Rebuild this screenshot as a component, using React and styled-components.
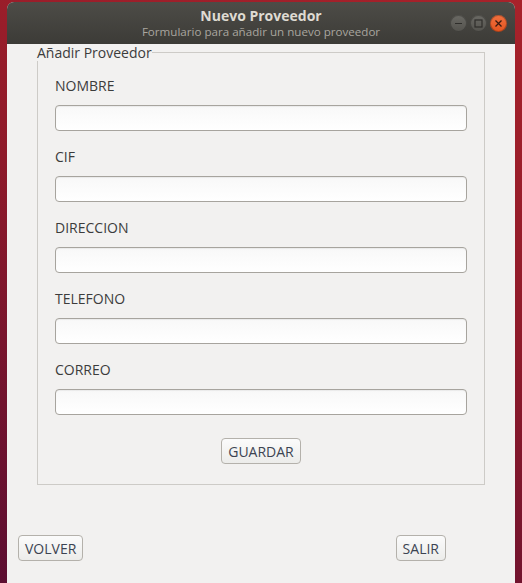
import React from "react";
import styled, { createGlobalStyle } from "styled-components";

const Global = createGlobalStyle`
  html, body { margin: 0; padding: 0; }
  body {
    width: 522px;
    height: 583px;
    overflow: hidden;
    background: linear-gradient(200deg, #a8222a 0%, #8e1a2a 45%, #5c0e31 100%);
    font-family: "Open Sans", "Noto Sans", sans-serif;
  }
`;

const Window = styled.div`
  margin: 2px 0 0 7px;
  width: 508px;
  height: 600px;
  display: flex;
  flex-direction: column;
  background: #f2f1f0;
  border-radius: 7px 7px 0 0;
  overflow: hidden;
`;

const TitleBar = styled.div`
  position: relative;
  height: 42px;
  flex: none;
  box-sizing: border-box;
  padding-top: 6px;
  background: linear-gradient(#4d4c47, #3c3b37);
  display: flex;
  flex-direction: column;
  align-items: center;
  gap: 2px;
`;

const Title = styled.div`
  font-family: "Open Sans", "Noto Sans", sans-serif;
  font-weight: 700;
  font-size: 14px;
  line-height: 15px;
  color: #dfdbd2;
`;

const Subtitle = styled.div`
  font-size: 11.6px;
  line-height: 13px;
  color: #a9a69f;
`;

const Controls = styled.div`
  position: absolute;
  right: 8px;
  top: 13px;
  display: flex;
  gap: 3px;
`;

const CircleBtn = styled.div`
  width: 17px;
  height: 17px;
  border-radius: 50%;
  display: flex;
  align-items: center;
  justify-content: center;
  background: ${(p) =>
    p.$close
      ? "linear-gradient(#f0703f, #e4541f)"
      : "linear-gradient(#6a6964, #53524d)"};
  box-shadow: inset 0 0 0 1px rgba(0,0,0,0.25);
`;

const Body = styled.div`
  flex: 1;
  display: flex;
  flex-direction: column;
`;

const Fieldset = styled.fieldset`
  margin: 0 30px 0 30px;
  padding: 0;
  border: 1px solid #cdcbc7;
  min-width: 0;
`;

const Legend = styled.legend`
  padding: 0;
  margin-left: -1px;
  font-size: 14px;
  line-height: 17px;
  color: #3c3c3c;
`;

const Inner = styled.div`
  padding: 17px 17px 20px 17px;
  display: flex;
  flex-direction: column;
`;

const Group = styled.div`
  display: flex;
  flex-direction: column;
  margin-bottom: 18px;
`;

const Label = styled.label`
  font-size: 14px;
  line-height: 16px;
  color: #3c3c3c;
  margin-bottom: 11px;
`;

const Input = styled.input`
  box-sizing: border-box;
  height: 26px;
  width: 412px;
  border: 1px solid #a7a49e;
  border-radius: 4px;
  background: linear-gradient(#f8f8f8, #ffffff);
  box-shadow: inset 0 1px 1px rgba(0,0,0,0.06);
  outline: none;
  padding: 0 6px;
  font-family: inherit;
`;

const Button = styled.button`
  box-sizing: border-box;
  height: 26px;
  padding: 0 6px;
  border: 1px solid #b4b1ab;
  border-radius: 4px;
  background: linear-gradient(#fbfbfb, #ececea);
  font-family: "Open Sans", "Noto Sans", sans-serif;
  font-size: 14px;
  color: #3c4452;
  cursor: pointer;
`;

const Center = styled.div`
  display: flex;
  justify-content: center;
  margin-top: 5px;
`;

const BottomRow = styled.div`
  display: flex;
  justify-content: space-between;
  padding: 50px 69px 0 11px;
`;

const fields = ["NOMBRE", "CIF", "DIRECCION", "TELEFONO", "CORREO"];

export default function App() {
  return (
    <>
      <Global />
      <Window>
        <TitleBar>
          <Title>Nuevo Proveedor</Title>
          <Subtitle>Formulario para añadir un nuevo proveedor</Subtitle>
          <Controls>
            <CircleBtn>
              <svg width="9" height="9" viewBox="0 0 9 9">
                <line x1="1" y1="4.5" x2="8" y2="4.5" stroke="#2f2e2b" strokeWidth="1.2" />
              </svg>
            </CircleBtn>
            <CircleBtn>
              <svg width="9" height="9" viewBox="0 0 9 9">
                <rect x="1" y="1" width="7" height="7" fill="none" stroke="#2f2e2b" strokeWidth="1.2" />
              </svg>
            </CircleBtn>
            <CircleBtn $close>
              <svg width="9" height="9" viewBox="0 0 9 9">
                <path d="M1.5 1.5 L7.5 7.5 M7.5 1.5 L1.5 7.5" stroke="#3a1a10" strokeWidth="1.3" />
              </svg>
            </CircleBtn>
          </Controls>
        </TitleBar>
        <Body>
          <Fieldset>
            <Legend>Añadir Proveedor</Legend>
            <Inner>
              {fields.map((f) => (
                <Group key={f}>
                  <Label>{f}</Label>
                  <Input />
                </Group>
              ))}
              <Center>
                <Button>GUARDAR</Button>
              </Center>
            </Inner>
          </Fieldset>
          <BottomRow>
            <Button>VOLVER</Button>
            <Button>SALIR</Button>
          </BottomRow>
        </Body>
      </Window>
    </>
  );
}
